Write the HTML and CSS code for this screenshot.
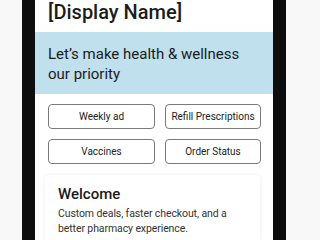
FILE: index.html
```html
<!DOCTYPE html>
<html>
<head>
<meta charset="utf-8">
<link rel="stylesheet" href="styles.css">
</head>
<body>
<div class="phone">
  <div class="screen">
    <div class="header">[Display Name]</div>
    <div class="banner">Let’s make health &amp; wellness<br>our priority</div>
    <div class="actions">
      <button class="action">Weekly ad</button>
      <button class="action">Refill Prescriptions</button>
      <button class="action">Vaccines</button>
      <button class="action">Order Status</button>
    </div>
    <div class="card">
      <div class="card-title">Welcome</div>
      <div class="card-text">Custom deals, faster checkout, and a better pharmacy experience.</div>
    </div>
  </div>
</div>
</body>
</html>
```
FILE: styles.css
```css
html, body {
  margin: 0;
  padding: 0;
  background: #f8f8f8;
  height: 240px;
  overflow: hidden;
}
body {
  font-family: Roboto, "Noto Sans", sans-serif;
  color: #1a1a1a;
}
.phone {
  margin-left: 22px;
  width: 238px;
  height: 240px;
  padding: 0 13px;
  background: linear-gradient(90deg, #0c0c0c 0, #222 40%, #0c0c0c 100%);
  box-sizing: content-box;
}
.screen {
  background: #fff;
  height: 240px;
  overflow: hidden;
}
.header {
  height: 32px;
  padding-left: 13px;
  font-size: 20px;
  line-height: normal;
  font-weight: 500;
  color: #1c1c1c;
  box-sizing: border-box;
}
.banner {
  background: #bfe0ec;
  height: 62px;
  box-sizing: border-box;
  padding: 12px 12px 0 13px;
  font-size: 15px;
  line-height: 20px;
  color: #1c1c1c;
  white-space: nowrap;
}
.actions {
  display: grid;
  grid-template-columns: 107px 96px;
  column-gap: 10px;
  row-gap: 10px;
  padding: 10px 12px 0 13px;
}
.action {
  height: 25px;
  background: #fff;
  border: 1px solid #7a7a7a;
  border-radius: 4px;
  font-family: Roboto, "Noto Sans", sans-serif;
  font-size: 10px;
  color: #222;
  padding: 0;
}
.card {
  margin: 11px 13px 0 10px;
  padding: 9px 13px;
  background: #fff;
  border-radius: 4px;
  box-shadow: 0 0 4px rgba(0,0,0,0.08);
}
.card-title {
  font-size: 15px;
  font-weight: 500;
  line-height: 20px;
  color: #1a1a1a;
}
.card-text {
  margin-top: 2px;
  font-size: 10.5px;
  letter-spacing: -0.1px;
  line-height: 15px;
  color: #333;
}
```
